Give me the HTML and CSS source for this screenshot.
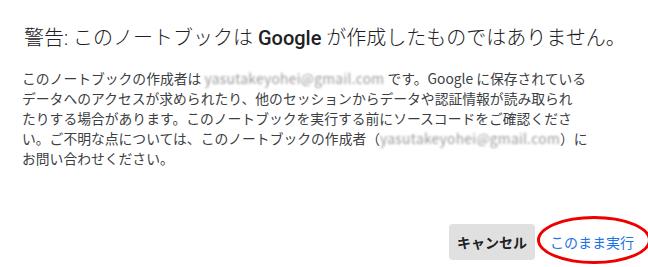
FILE: index.html
```html
<html>
<head>
<title>警告</title>
<meta charset="utf-8">
<link rel="stylesheet" href="styles.css">
</head>
<body>
	<div class="dialog">
		<h2 class="title">警告: このノートブックは <b>Google</b> が作成したものではありません。</h2>

		<p class="message">
			このノートブックの作成者は <span class="blur">yasutakeyohei@gmail.com</span> です。Google に保存されている<br>
			データへのアクセスが求められたり、他のセッションからデータや認証情報が読み取られ<br>
			たりする場合があります。このノートブックを実行する前にソースコードをご確認くださ<br>
			い。ご不明な点については、このノートブックの作成者（<span class="blur">yasutakeyohei@gmail.com</span>）に<br>
			お問い合わせください。
		</p>

		<div class="actions">
			<button class="btn cancel">キャンセル</button>
			<button class="btn run">このまま実行</button>
		</div>
	</div>
</body>
</html>
```
FILE: styles.css
```css
body{
	margin:0;padding:0;
	background:#fff;
}

	div.dialog{
		width:648px;
		height:267px;
		box-sizing:border-box;
		padding:22px 0 0 22px;
		display:flex;
		flex-direction:column;
	}

	h2.title{
		margin:0;
		padding-left:2px;
		font-family:Roboto,"Noto Sans CJK JP",sans-serif;
		font-weight:300;
		font-size:20px;
		line-height:32px;
		color:#202124;
		white-space:nowrap;
	}

	h2.title b{
		font-weight:500;
	}

	p.message{
		margin:14px 0 0 0;
		font-family:"Noto Sans CJK JP",sans-serif;
		font-size:13.8px;
		line-height:20px;
		color:#3c4043;
		white-space:nowrap;
	}

	span.blur{
		color:#999;
		filter:blur(1.2px);
		letter-spacing:0.3px;
	}

	div.actions{
		margin-top:auto;
		margin-bottom:7px;
		display:flex;
		justify-content:flex-end;
		align-items:center;
		gap:2px;
	}

	button.btn{
		font-family:"Noto Sans CJK JP",sans-serif;
		font-size:14px;
		border:none;
		background:none;
		height:36px;
		padding:0 8px;
		border-radius:4px;
	}

	button.cancel{
		background:#e0e0e0;
		color:#202124;
		font-weight:700;
		width:86px;
	}

	button.run{
		position:relative;
		color:#1a73e8;
		width:110px;
		margin-right:1px;
	}

	button.run::after{
		content:"";
		position:absolute;
		left:0;
		top:-8px;
		width:114px;
		height:48px;
		border:3px solid #e00;
		border-radius:50%;
		box-sizing:border-box;
	}
```
